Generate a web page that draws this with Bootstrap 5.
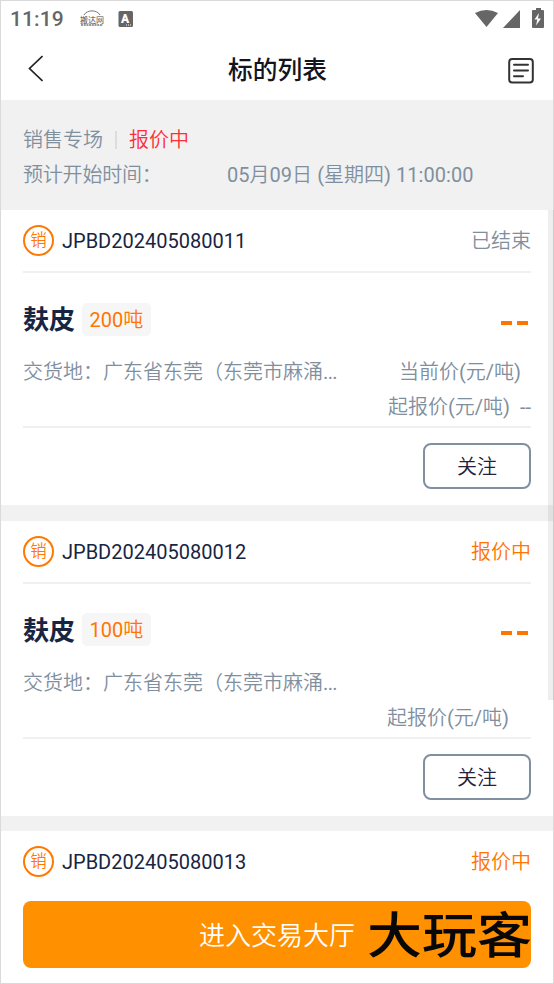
<!DOCTYPE html>
<html lang="zh-CN">
<head>
<meta charset="utf-8">
<meta name="viewport" content="width=device-width, initial-scale=1">
<title>标的列表</title>
<link href="https://cdn.jsdelivr.net/npm/bootstrap@5.3.0/dist/css/bootstrap.min.css" rel="stylesheet">
<style>
body{font-family:Roboto,"Noto Sans CJK SC DemiLight","Noto Sans CJK SC",sans-serif;font-size:20px;line-height:30px;color:#7f8f9e;background:#fff;overflow:hidden}
.page-title,.lot-name,.watermark{font-family:Roboto,"Noto Sans CJK SC",sans-serif}
.screen{height:984px;border:1px solid #dadada}
.status-bar{height:36px;padding:0 9px 0 9px;color:#666}
.clock{font-size:21px;font-weight:500;letter-spacing:.1px}
.title-bar{height:63px;padding:0 19px 0 25px}
.page-title{font-size:24.7px;font-weight:500;color:#14141c;line-height:36px;padding:5px 0 0 4px}
.session{height:110px;background:#f1f1f1;padding:22px 22px 0;line-height:35px}
.session-row{padding-top:1px;height:35px}
.live{color:#ff2d37}
.vline{width:2px;height:18px;background:#dcdcdc;margin:0 12px}
.start-label{width:137px;letter-spacing:-.2px}
.start-date{margin-left:67px;letter-spacing:.03px}
.lots{background:#f1f1f1}
.lot{background:#fff;padding:0 22px;margin-bottom:15.5px;height:295px}
.lot-head{height:63px;border-bottom:2px solid #f0f0f0}
.lot-code,.lot-state{padding-top:2px;line-height:31px}
.seal{width:31px;height:31px;border:2px solid #ff7800;color:#ff7800;font-size:16.5px;line-height:28px;margin-right:8px}
.navy{color:#172543}
.orange{color:#ff7500}
.lot-name{font-size:26px;font-weight:700;line-height:36px}
.qty{height:33px;padding:0 7.5px;border-radius:5px;background:#f6f6f6;color:#ff7500;margin-left:7px;margin-bottom:2px;line-height:35px}
.lot-main{height:155px;border-bottom:2px solid #f0f0f0;padding-top:27px}
.lot-top{height:40px;margin-bottom:14px}
.dashes{gap:5px;padding:5px 3px 0 0}
.dash{width:11px;height:4px;background:#ff7500}
.prices{line-height:35px;margin-top:1px}
.now-price{padding-right:10px}
.last-price{padding-right:22px}
.place{line-height:37px}
.place-dots{letter-spacing:-.6px}
.follow{width:108px;height:46px;border:2px solid #8190a0;border-radius:8px;color:#232038;font-size:20px;line-height:32px;padding:2px 0 0;margin-top:15px;background:#fff}
.bottom-bar{position:absolute;left:1px;right:1px;bottom:1px;height:98px;background:#fff;padding:16px 22px 0}
.enter{height:67px;border-radius:8px;background:#ff9000;color:#fff;font-size:26px;line-height:40px;border:0;padding-top:4px}
.watermark{position:absolute;left:367px;top:904px;font-size:55px;line-height:64px;color:#080808;font-weight:500;white-space:nowrap;transform:scaleY(.88)}
.scroll-thumb{position:absolute;left:548px;top:210px;width:6px;height:490px;background:rgba(0,0,0,.065)}
</style>
</head>
<body>
<main class="screen position-relative overflow-hidden">
  <div class="status-bar d-flex align-items-center">
    <span class="clock">11:19</span>
    <svg class="ms-3" width="24" height="18" viewBox="0 0 24 18" fill="none" stroke="#777"><path d="M4 5C7-.5 17-.5 20 5"/><text x="0" y="12.500" font-size="8" textLength="24" fill="#444" stroke="none">搬达网</text><path d="M1 15h22" stroke-width="1.500" stroke-dasharray="2 .7"/></svg>
    <svg style="margin-left:14px" width="16" height="16" viewBox="0 0 16 16"><rect x=".5" width="14.500" height="16" rx="1.500" fill="#666"/><text x="7" y="11.700" text-anchor="middle" font-size="12" font-weight="900" fill="#fff">A</text><path d="M8 14h1m1 0h1m1 0h1" stroke="#fff"/></svg>
    <svg class="ms-auto" width="72" height="22" viewBox="0 0 72 22" fill="#666"><path d="M3 5Q14.500-1 26 5L14.500 19Z"/><path d="M48 2v18H31Z"/><path d="M62 2h2V0h5v2h2q1 0 1 1v16q0 1-1 1H61q-1 0-1-1V3q0-1 1-1Z"/><path d="m67 5-4.500 6.500h2.800L64 17.500l5-7h-3Z" fill="#fff"/></svg>
  </div>
  <header class="title-bar d-flex align-items-center justify-content-between position-relative">
    <svg width="17" height="28" viewBox="0 0 17 28" fill="none" stroke="#222" stroke-width="1.700"><path d="M16.500 1 3.500 13.500l13 12.500"/></svg>
    <h1 class="page-title m-0">标的列表</h1>
    <svg width="26" height="30" viewBox="0 0 26 30" fill="none" stroke="#333" stroke-width="2" stroke-linecap="round"><rect x="1.200" y="5" width="23.600" height="23.600" rx="3"/><path d="M6 10.800h14M6 16.500h14M6 22.300h9"/></svg>
  </header>
  <section class="session">
    <div class="session-row d-flex align-items-center"><span>销售专场</span><i class="vline"></i><span class="live">报价中</span></div>
    <div class="session-row d-flex"><span class="start-label text-nowrap">预计开始时间：</span><span class="start-date">05月09日 (星期四) 11:00:00</span></div>
  </section>
  <div class="lots">
  <article class="lot">
    <div class="lot-head d-flex align-items-center"><span class="seal rounded-circle text-center">销</span><span class="lot-code navy">JPBD202405080011</span><span class="lot-state ms-auto">已结束</span></div>
    <div class="lot-main">
      <div class="lot-top d-flex align-items-center"><strong class="lot-name navy">麸皮</strong><span class="qty">200吨</span><span class="dashes ms-auto d-flex"><i class="dash"></i><i class="dash"></i></span></div>
      <div class="d-flex justify-content-between"><span class="place">交货地：广东省东莞（东莞市麻涌<span class="place-dots">...</span></span><div class="prices text-end"><div class="now-price">当前价(元/吨)</div><div>起报价(元/吨)&nbsp; --</div></div></div>
    </div>
    <div class="text-end"><button class="follow">关注</button></div>
  </article>
  <article class="lot">
    <div class="lot-head d-flex align-items-center"><span class="seal rounded-circle text-center">销</span><span class="lot-code navy">JPBD202405080012</span><span class="lot-state ms-auto orange">报价中</span></div>
    <div class="lot-main">
      <div class="lot-top d-flex align-items-center"><strong class="lot-name navy">麸皮</strong><span class="qty">100吨</span><span class="dashes ms-auto d-flex"><i class="dash"></i><i class="dash"></i></span></div>
      <div class="d-flex justify-content-between"><span class="place">交货地：广东省东莞（东莞市麻涌<span class="place-dots">...</span></span><div class="prices text-end"><div>&nbsp;</div><div class="last-price">起报价(元/吨)</div></div></div>
    </div>
    <div class="text-end"><button class="follow">关注</button></div>
  </article>
  <article class="lot">
    <div class="lot-head d-flex align-items-center"><span class="seal rounded-circle text-center">销</span><span class="lot-code navy">JPBD202405080013</span><span class="lot-state ms-auto orange">报价中</span></div>
  </article>
  </div>
</main>
<div class="bottom-bar"><button class="enter w-100">进入交易大厅</button></div>
<div class="watermark">大玩客</div>
<div class="scroll-thumb"></div>
<script src="https://cdn.jsdelivr.net/npm/bootstrap@5.3.0/dist/js/bootstrap.bundle.min.js"></script>
</body>
</html>
